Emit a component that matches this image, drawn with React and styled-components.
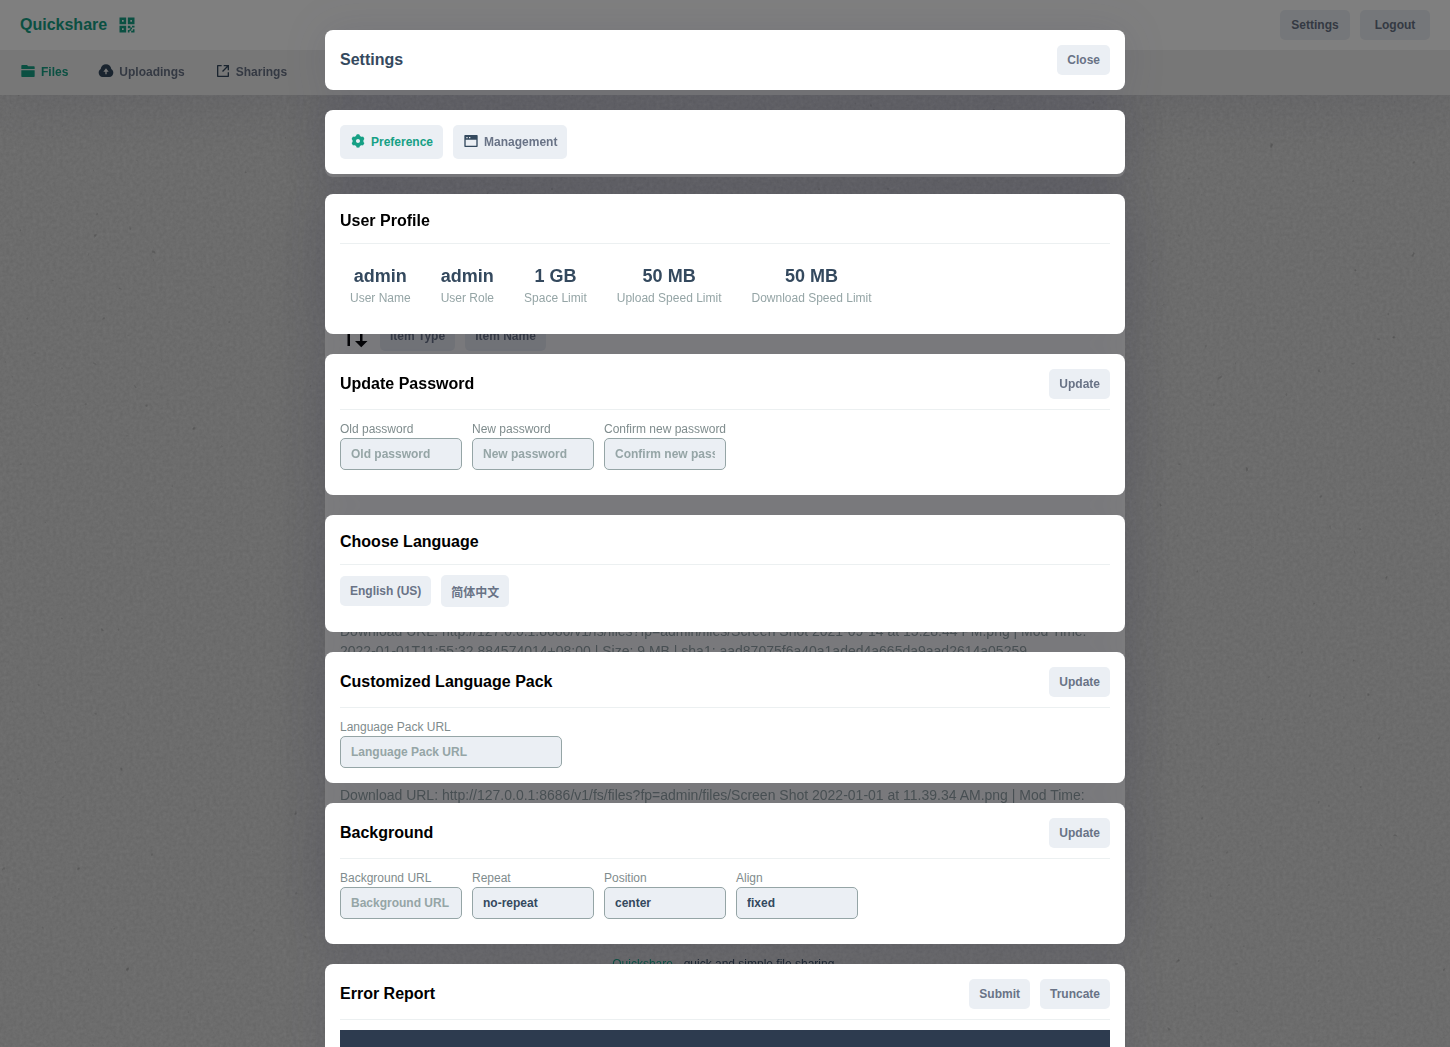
import React from "react";
import styled, { createGlobalStyle } from "styled-components";
import {
  RiQrCodeFill,
  RiFolder2Fill,
  RiUploadCloudFill,
  RiShareBoxLine,
  RiSettings3Fill,
  RiWindowFill,
  RiArrowUpDownFill,
} from "react-icons/ri";

const color = {
  green: "#16a085",
  navy: "#34495e",
  slate: "#697386",
  muted: "#95a5a6",
  label: "#7f8c8d",
  field: "#ebeff4",
  line: "#ecf0f1",
};
const tint = "0 0 60px rgba(50, 50, 93, 0.15)";

const GlobalStyle = createGlobalStyle`
  * { box-sizing: border-box; }
  body {
    margin: 0;
    background: #e2e2e2;
    color: ${color.navy};
    font-family: "Liberation Sans", Arial, "Noto Sans CJK SC", sans-serif;
    font-size: 12px;
  }
  h1, h2, h3, p, dl, dd, ul { margin: 0; padding: 0; }
`;

const Grain = styled.svg`
  position: fixed;
  inset: 0;
  width: 100%;
  height: 100%;
`;

const Page = styled.div`
  position: relative;
  z-index: 0;
`;

const Row = styled.div`
  display: flex;
  align-items: center;
  gap: 10px;
`;

const Button = styled.button`
  display: flex;
  align-items: center;
  justify-content: center;
  gap: 5px;
  height: ${(p) => p.$height || 30}px;
  min-width: ${(p) => p.$min || 0}px;
  padding: 0 10px;
  border: 0;
  border-radius: 5px;
  background: ${color.field};
  color: ${(p) => (p.$active ? color.green : color.slate)};
  font: inherit;
  font-weight: 700;
  white-space: nowrap;
  svg {
    color: ${(p) => (p.$active ? color.green : color.navy)};
    margin-bottom: 2px;
  }
`;

const TopBar = styled.header`
  position: relative;
  z-index: 2;
  display: flex;
  align-items: center;
  justify-content: space-between;
  height: 50px;
  padding: 0 20px;
  background: #fff;
`;

const Brand = styled.a`
  display: flex;
  align-items: center;
  gap: 10px;
  color: ${color.green};
  font-size: 16px;
  font-weight: 700;
  text-decoration: none;
`;

const NavBar = styled.nav`
  position: relative;
  z-index: 1;
  display: flex;
  align-items: center;
  gap: 30px;
  height: 45px;
  padding: 0 20px 2px;
  background: #efefef;
  box-shadow: ${tint};
`;

const NavLink = styled.a`
  display: flex;
  align-items: center;
  gap: 5px;
  color: ${(p) => (p.$active ? color.green : color.slate)};
  font-weight: 700;
  text-decoration: none;
  svg {
    color: ${(p) => (p.$active ? color.green : color.navy)};
    margin-bottom: 2px;
  }
`;

const Column = styled.main`
  display: flex;
  flex-direction: column;
  gap: 20px;
  max-width: 800px;
  margin: 0 auto;
  padding-top: 20px;
`;

const Sheet = styled.section`
  padding: 0 15px;
  border-radius: 8px;
  background: #fff;
  box-shadow: ${tint};
`;

const UsageSheet = styled(Sheet)`
  height: 62px;
`;

const FileSheet = styled(Sheet)`
  padding: 124px 15px;
`;

const FileList = styled.ul`
  display: flex;
  flex-direction: column;
  gap: 124px;
  list-style: none;
  padding-top: 270px;
`;

const FileMeta = styled.li`
  color: ${color.muted};
  font-size: 14px;
  line-height: 20px;
`;

const Footer = styled.footer`
  padding-top: 5px;
  text-align: center;
  line-height: 20px;
  a { color: ${color.green}; text-decoration: none; }
`;

const Overlay = styled.div`
  position: fixed;
  inset: 0;
  z-index: 1;
  overflow-y: auto;
  scrollbar-width: none;
  padding: 30px 0;
  background: rgba(0, 0, 0, 0.5);
`;

const Dialog = styled.div`
  display: flex;
  flex-direction: column;
  gap: 20px;
  max-width: 800px;
  margin: 0 auto;
  filter: drop-shadow(0 0 20px rgba(50, 50, 93, 0.12));
`;

const Panel = styled.section`
  padding: 15px;
  border-radius: 8px;
  background: #fff;
`;

const PanelHead = styled.div`
  display: flex;
  align-items: center;
  justify-content: space-between;
  ${(p) =>
    !p.$plain &&
    `padding-bottom: 10px; margin-bottom: 10px; border-bottom: 1px solid ${color.line};`}
`;

const Title = styled.h2`
  color: ${(p) => (p.$soft ? color.navy : "#000")};
  font-size: 16px;
  line-height: 24px;
`;

const Body = styled.div`
  display: flex;
  align-items: center;
  gap: 10px;
  padding-bottom: ${(p) => (p.$flush ? 0 : 10)}px;
`;

const Stats = styled.dl`
  display: flex;
  gap: 10px;
  && { padding-top: 10px; }
`;

const Stat = styled.div`
  display: flex;
  flex-direction: column-reverse;
  padding: 0 10px;
  text-align: center;
  dt { color: ${color.muted}; line-height: 21px; }
  dd { font-size: 18px; font-weight: 700; line-height: 24px; }
`;

const FieldBox = styled.div`
  width: ${(p) => (p.$wide ? 222 : 122)}px;
  label {
    display: block;
    color: ${color.label};
    line-height: 18px;
    white-space: nowrap;
  }
  input {
    display: block;
    width: 100%;
    height: 32px;
    padding: 0 10px;
    border: 1px solid ${color.muted};
    border-radius: 5px;
    background: ${color.field};
    color: ${color.navy};
    font: inherit;
    font-weight: 700;
  }
  input::placeholder { color: ${color.muted}; opacity: 1; }
`;

const Log = styled.pre`
  min-height: 200px;
  margin: 0;
  background: #2d3b4f;
`;

function Field({ id, label, value, type = "text", wide }) {
  return (
    <FieldBox $wide={wide}>
      <label htmlFor={id}>{label}</label>
      <input id={id} type={type} placeholder={label} defaultValue={value} />
    </FieldBox>
  );
}

function Section({ title, actions = [], children }) {
  return (
    <Panel>
      <PanelHead>
        <Title>{title}</Title>
        <Row>
          {actions.map((a) => (
            <Button key={a}>{a}</Button>
          ))}
        </Row>
      </PanelHead>
      {children}
    </Panel>
  );
}

const profile = [
  ["User Name", "admin"],
  ["User Role", "admin"],
  ["Space Limit", "1 GB"],
  ["Upload Speed Limit", "50 MB"],
  ["Download Speed Limit", "50 MB"],
];

const files = [
  "Download URL: http://127.0.0.1:8686/v1/fs/files?fp=admin/files/Screen Shot 2021-09-14 at 15.28.44 PM.png | Mod Time: 2022-01-01T11:55:32.884574014+08:00 | Size: 9 MB | sha1: aad87075f6a40a1aded4a665da9aad2614a05259",
  "Download URL: http://127.0.0.1:8686/v1/fs/files?fp=admin/files/Screen Shot 2022-01-01 at 11.39.34 AM.png | Mod Time:",
];

export default function App() {
  return (
    <>
      <GlobalStyle />
      <Grain aria-hidden="true">
        <filter id="paper" x="0" y="0" width="100%" height="100%">
          <feTurbulence type="fractalNoise" baseFrequency="0.3" numOctaves="3" seed="4" />
          <feColorMatrix values="0 0 0 0 0  0 0 0 0 0  0 0 0 0 0  0.12 0 0 0 -0.02" />
        </filter>
        <filter id="specks" x="0" y="0" width="100%" height="100%">
          <feTurbulence type="fractalNoise" baseFrequency="0.12" numOctaves="2" seed="9" />
          <feColorMatrix values="0 0 0 0 0  0 0 0 0 0  0 0 0 0 0  2 0 0 0 -1.6" />
        </filter>
        <rect width="100%" height="100%" filter="url(#paper)" />
        <rect width="100%" height="100%" filter="url(#specks)" />
      </Grain>
      <Page>
        <TopBar>
          <Brand href="#home">
            Quickshare
            <RiQrCodeFill size={20} />
          </Brand>
          <Row>
            <Button $min={70}>Settings</Button>
            <Button $min={70}>Logout</Button>
          </Row>
        </TopBar>
        <NavBar>
          <NavLink href="#files" $active>
            <RiFolder2Fill size={16} />
            Files
          </NavLink>
          <NavLink href="#uploadings">
            <RiUploadCloudFill size={16} />
            Uploadings
          </NavLink>
          <NavLink href="#sharings">
            <RiShareBoxLine size={16} />
            Sharings
          </NavLink>
        </NavBar>
        <Column>
          <UsageSheet />
          <FileSheet>
            <Row>
              <RiArrowUpDownFill size={30} color="#000" />
              <Button>Item Type</Button>
              <Button>Item Name</Button>
            </Row>
            <FileList>
              {files.map((f) => (
                <FileMeta key={f}>{f}</FileMeta>
              ))}
            </FileList>
          </FileSheet>
          <Footer>
            <a href="#quickshare">Quickshare</a> - quick and simple file sharing.
          </Footer>
        </Column>
      </Page>

      <Overlay>
        <Dialog role="dialog" aria-label="Settings">
          <Panel>
            <PanelHead $plain>
              <Title $soft>Settings</Title>
              <Button>Close</Button>
            </PanelHead>
          </Panel>
          <Panel>
            <Row>
              <Button $active $height={34}>
                <RiSettings3Fill size={16} />
                Preference
              </Button>
              <Button $height={34}>
                <RiWindowFill size={16} />
                Management
              </Button>
            </Row>
          </Panel>
          <Section title="User Profile">
            <Body>
              <Stats>
                {profile.map(([name, value]) => (
                  <Stat key={name}>
                    <dt>{name}</dt>
                    <dd>{value}</dd>
                  </Stat>
                ))}
              </Stats>
            </Body>
          </Section>
          <Section title="Update Password" actions={["Update"]}>
            <Body>
              <Field id="old" type="password" label="Old password" />
              <Field id="new" type="password" label="New password" />
              <Field id="confirm" type="password" label="Confirm new password" />
            </Body>
          </Section>
          <Section title="Choose Language">
            <Body>
              <Button>English (US)</Button>
              <Button $height={32} lang="zh-CN">简体中文</Button>
            </Body>
          </Section>
          <Section title="Customized Language Pack" actions={["Update"]}>
            <Body $flush>
              <Field id="pack" label="Language Pack URL" wide />
            </Body>
          </Section>
          <Section title="Background" actions={["Update"]}>
            <Body>
              <Field id="bg-url" label="Background URL" />
              <Field id="bg-repeat" label="Repeat" value="no-repeat" />
              <Field id="bg-position" label="Position" value="center" />
              <Field id="bg-align" label="Align" value="fixed" />
            </Body>
          </Section>
          <Section title="Error Report" actions={["Submit", "Truncate"]}>
            <Log />
          </Section>
        </Dialog>
      </Overlay>
    </>
  );
}
